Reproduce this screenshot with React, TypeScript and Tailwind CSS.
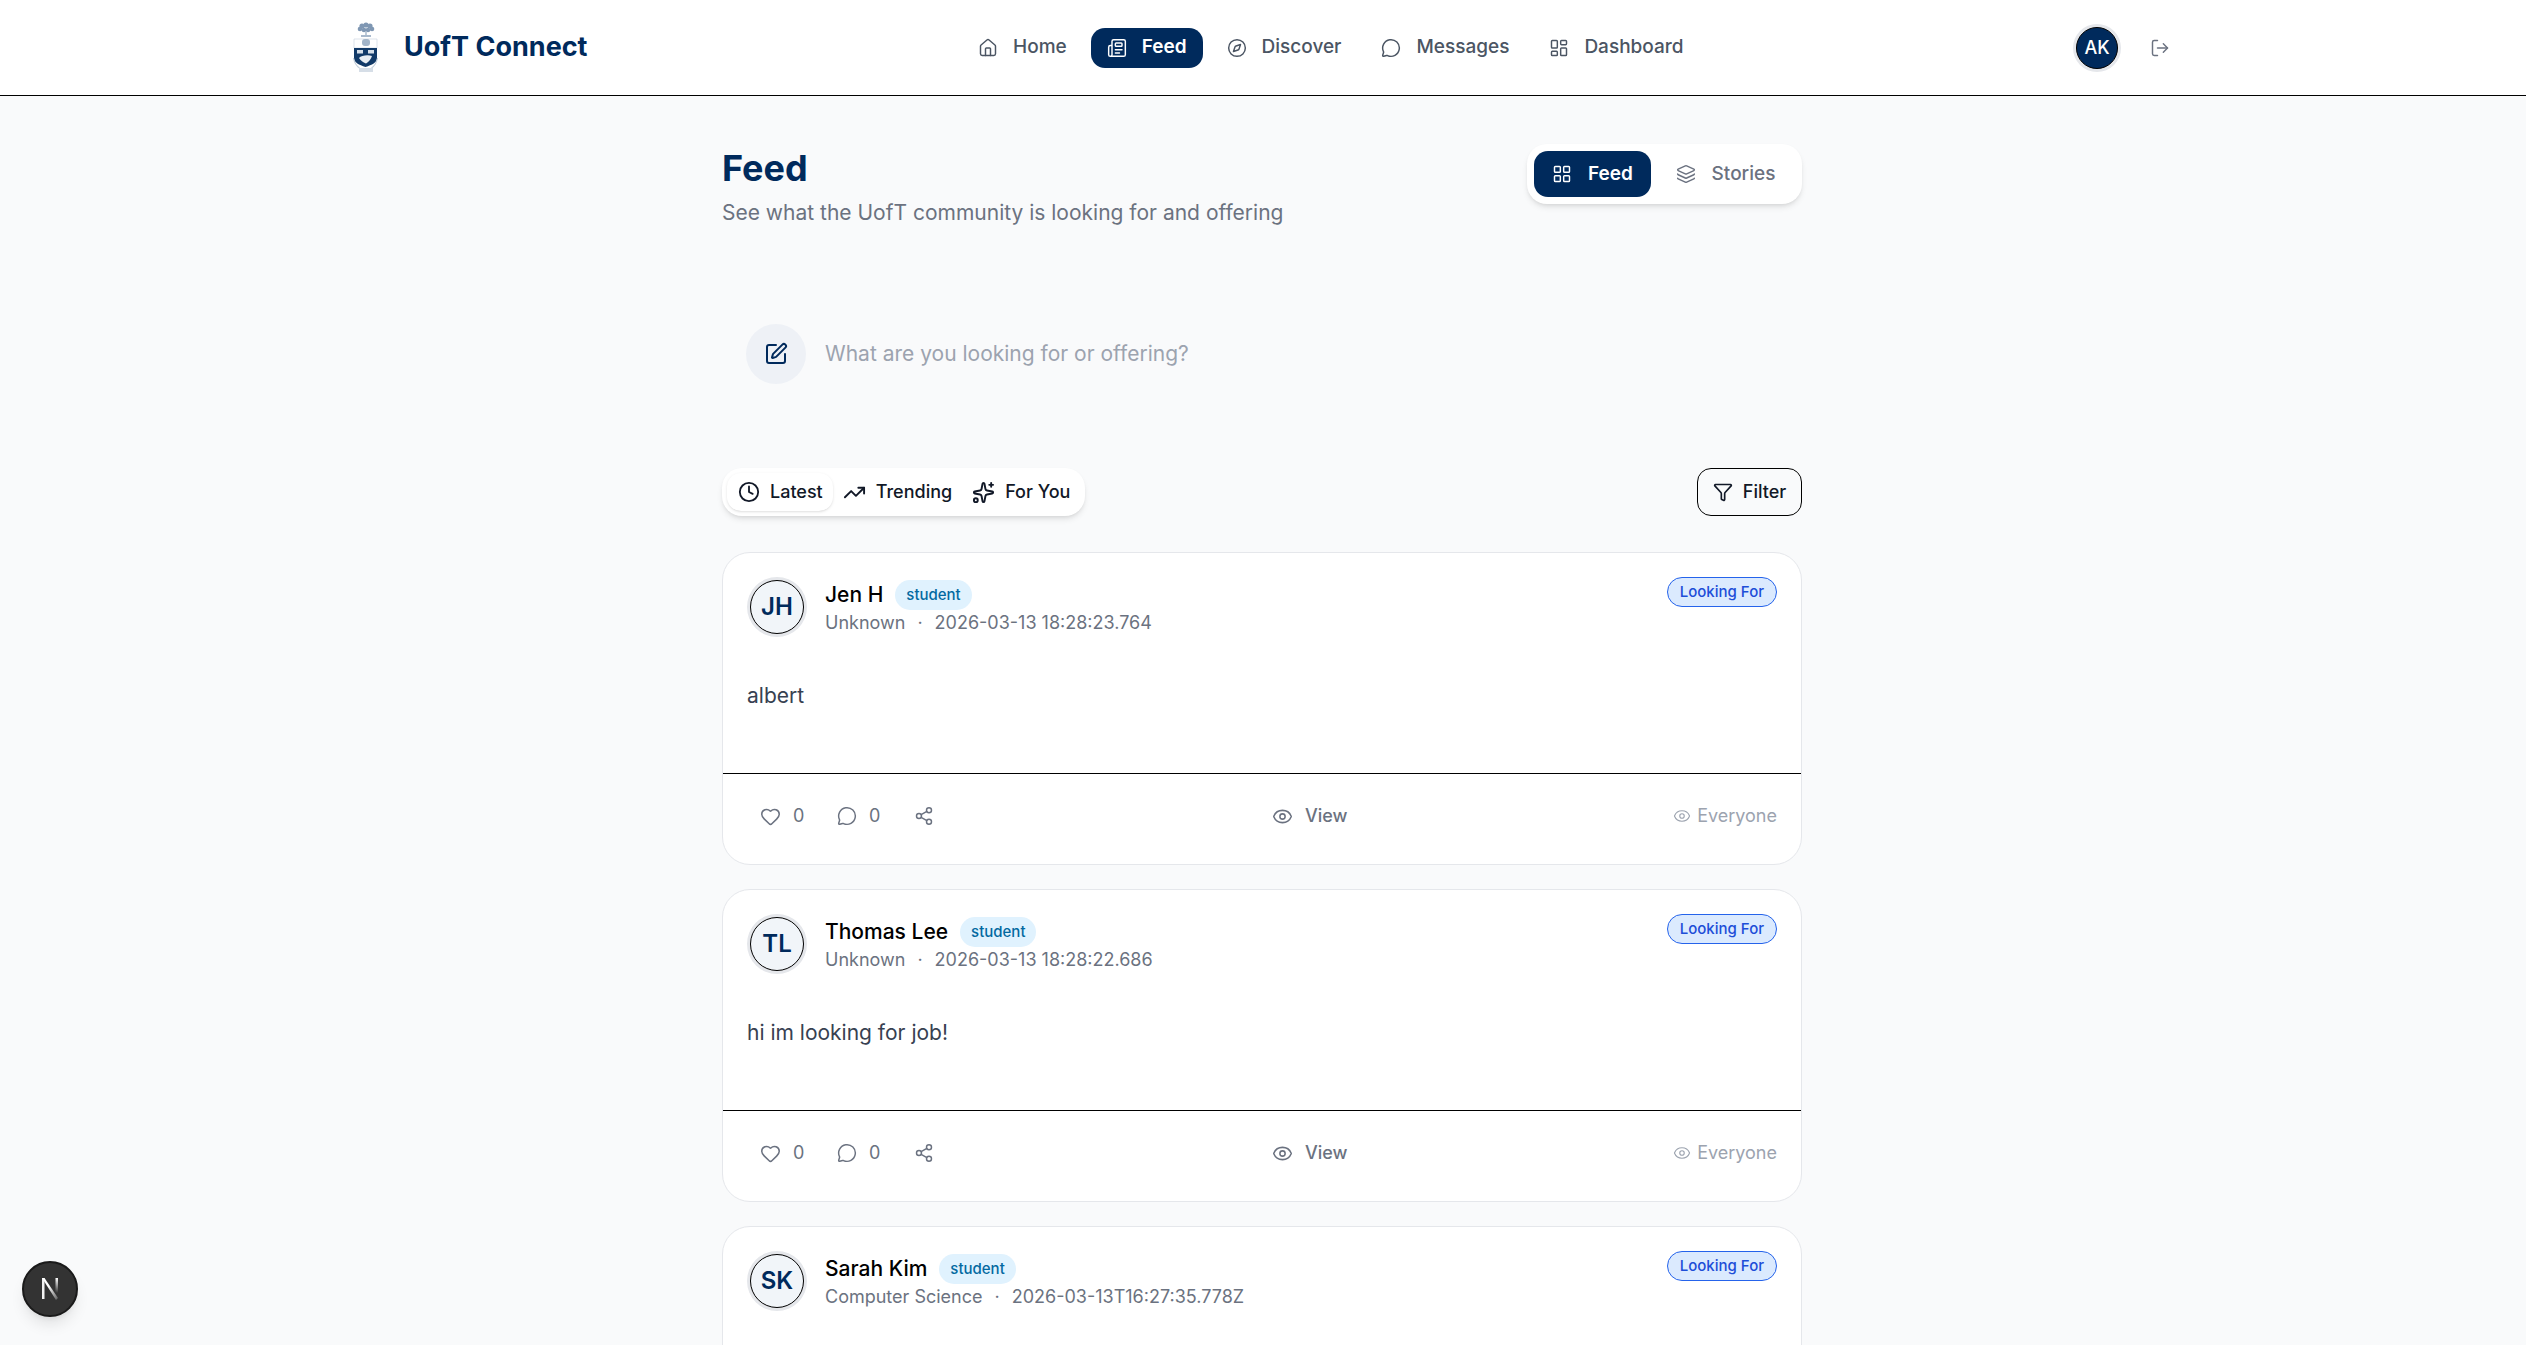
import React from 'react'
import {
  Clock,
  Compass,
  Eye,
  Filter,
  Heart,
  Home,
  Layers,
  LayoutDashboard,
  LayoutGrid,
  LogOut,
  MessageCircle,
  Newspaper,
  Share2,
  Sparkles,
  SquarePen,
  TrendingUp,
} from 'lucide-react'

const Crest = () => (
  <svg width="26" height="52" viewBox="0 0 26 52" fill="none" className="shrink-0">
    <g fill="#7f97b3">
      <circle cx="13" cy="3" r="2.6" />
      <circle cx="9" cy="4" r="2.6" />
      <circle cx="17" cy="4" r="2.6" />
      <circle cx="7" cy="7" r="2.3" />
      <circle cx="19" cy="7" r="2.3" />
      <circle cx="11" cy="8" r="2.3" />
      <circle cx="15" cy="8" r="2.3" />
    </g>
    <path d="M13 9v4" stroke="#a9bacd" strokeWidth="1.5" />
    <path d="M8 14h10" stroke="#a9bacd" strokeWidth="2" />
    <path d="M1 17h23v9H1z" fill="#ffffff" stroke="#c8d2de" strokeWidth="0.6" />
    <rect x="9" y="17" width="8" height="7" rx="3" fill="#a3b5c9" />
    <path d="M1 26h23v11c0 3-5 6-11.500 8C6 43 1 40 1 37z" fill="#123a68" />
    <rect x="4" y="28" width="6" height="3.500" fill="#d5dee8" />
    <rect x="15" y="28" width="6" height="3.500" fill="#d5dee8" />
    <path d="M6 36c2-2.500 9-3.500 13-2-1 3-3 6-6 7.500-3-1-5.500-3-7-5.500z" fill="#e9eef3" />
    <path d="M0.500 36c1 5 3 8 6 10M24.500 36c-1 5-3 8-6 10" stroke="#c3cfdb" strokeWidth="1.200" />
    <path d="M6 46h14v4H6z" fill="#d6dee7" />
  </svg>
)

const NextMark = () => (
  <svg width="18" height="22" viewBox="0 0 18 22" fill="none">
    <defs>
      <linearGradient id="nextright" x1="0" y1="0" x2="0" y2="1">
        <stop offset="0" stopColor="#ffffff" />
        <stop offset="1" stopColor="#ffffff" stopOpacity="0" />
      </linearGradient>
      <linearGradient id="nextdiag" x1="0" y1="0" x2="1" y2="1">
        <stop offset="0.4" stopColor="#ffffff" />
        <stop offset="1" stopColor="#ffffff" stopOpacity="0.2" />
      </linearGradient>
    </defs>
    <rect x="1" y="0" width="2.500" height="21" fill="#f2f2f2" />
    <rect x="14.500" y="0" width="2.500" height="15" fill="url(#nextright)" />
    <polygon points="1,0 3.500,0 17,20 15,22" fill="url(#nextdiag)" />
  </svg>
)

const navItems = [
  { label: 'Home', icon: Home },
  { label: 'Feed', icon: Newspaper, active: true },
  { label: 'Discover', icon: Compass },
  { label: 'Messages', icon: MessageCircle },
  { label: 'Dashboard', icon: LayoutDashboard },
]

const posts = [
  { initials: 'JH', name: 'Jen H', dept: 'Unknown', time: '2026-03-13 18:28:23.764', body: 'albert' },
  { initials: 'TL', name: 'Thomas Lee', dept: 'Unknown', time: '2026-03-13 18:28:22.686', body: 'hi im looking for job!' },
  { initials: 'SK', name: 'Sarah Kim', dept: 'Computer Science', time: '2026-03-13T16:27:35.778Z' },
]

type Post = { initials: string; name: string; dept: string; time: string; body?: string }

const Navbar = () => (
  <header className="h-[96px] shrink-0 bg-white border-b border-black">
    <div className="h-full flex items-center justify-between pl-[353px] pr-[356px]">
      <div className="flex items-center gap-[25px]">
        <Crest />
        <span className="text-[27px] font-bold text-[#002a5c]">UofT Connect</span>
      </div>
      <nav className="flex items-center gap-2 ml-[-2px]">
        {navItems.map(({ label, icon: Icon, active }) => (
          <div
            key={label}
            className={`h-10 flex items-center gap-[15px] px-4 rounded-[14px] text-[19px] ${
              active ? 'bg-[#002a5c] text-white font-semibold' : 'text-[#4b5563] font-medium'
            }`}
          >
            <Icon size={20} strokeWidth={1.75} />
            {label}
          </div>
        ))}
      </nav>
      <div className="flex items-center gap-[32px]">
        <div className="w-[42px] h-[42px] rounded-full bg-[#002a5c] border border-black ring-[3px] ring-[#e5e7eb] flex items-center justify-center text-white text-lg font-medium">
          AK
        </div>
        <LogOut size={20} strokeWidth={1.75} className="text-[#6b7280]" />
      </div>
    </div>
  </header>
)

const PostCard = ({ initials, name, dept, time, body }: Post) => (
  <article className="shrink-0 h-[313px] bg-white border border-[#e5e7eb] rounded-[28px] flex flex-col">
    <div className="h-[221px] border-b border-black px-[24px] pt-[24px] flex flex-col">
      <div className="flex justify-between items-start">
        <div className="flex items-center gap-[18px]">
          <div className="w-[54px] h-[54px] m-[3px] rounded-full bg-[#f1f5f9] border border-black ring-[3px] ring-[#e5e7eb] flex items-center justify-center text-2xl font-semibold text-[#002a5c]">
            {initials}
          </div>
          <div className="flex flex-col">
            <div className="flex items-center gap-[12px] h-[30px] mt-[1px]">
              <span className="text-[21px] font-medium text-black">{name}</span>
              <span className="h-[30px] px-[11px] rounded-full bg-[#e0f2fe] text-[#0369a1] text-[15px] font-medium flex items-center">
                student
              </span>
            </div>
            <div className="flex items-center gap-[12px] text-lg text-[#6b7280] leading-[25px]">
              <span>{dept}</span>
              <span>·</span>
              <span>{time}</span>
            </div>
          </div>
        </div>
        <span className="h-[30px] px-[12px] rounded-full bg-[#dbeafe] border border-[#2563eb] text-[#1d4ed8] text-[15px] font-medium flex items-center">
          Looking For
        </span>
      </div>
      {body && <p className="mt-[45px] text-[21px] leading-[28px] text-[#374151]">{body}</p>}
    </div>
    {body && (
      <div className="flex-1 relative flex items-center justify-between pl-[37px] pr-[24px] pb-[6px] text-[#6b7280]">
        <div className="flex items-center text-lg">
          <Heart size={21} strokeWidth={1.75} />
          <span className="ml-3 w-[12px]">0</span>
          <MessageCircle size={20} strokeWidth={1.75} className="ml-[32px]" />
          <span className="ml-3 w-[12px]">0</span>
          <Share2 size={20} strokeWidth={1.75} className="ml-[33px]" />
        </div>
        <div className="absolute left-[549px] flex items-center gap-3 text-lg font-medium">
          <Eye size={21} strokeWidth={1.75} />
          View
        </div>
        <div className="flex items-center gap-[6px] text-lg text-[#9ca3af]">
          <Eye size={18} strokeWidth={1.5} />
          Everyone
        </div>
      </div>
    )}
  </article>
)

export default function App() {
  return (
    <div className="relative h-screen overflow-hidden bg-[#f9fafb] flex flex-col font-['Inter',sans-serif]">
      <Navbar />
      <main className="w-[1080px] ml-[722px] flex flex-col">
        <section className="flex justify-between items-start pt-[48px]">
          <div>
            <h1 className="text-[36px] leading-[48px] font-bold text-[#002a5c]">Feed</h1>
            <p className="mt-[7px] text-[21px] leading-[28px] text-[#6b7280]">See what the UofT community is looking for and offering</p>
          </div>
          <div className="flex items-center p-[7px] bg-white rounded-[20px] shadow-md">
            <div className="h-[46px] w-[117px] flex items-center justify-center gap-4 rounded-[14px] bg-[#002a5c] text-white text-[19px] font-semibold">
              <LayoutGrid size={20} strokeWidth={1.75} />
              Feed
            </div>
            <div className="h-[46px] w-[144px] pl-[5px] flex items-center justify-center gap-4 text-[#6b7280] text-[19px] font-medium">
              <Layers size={20} strokeWidth={1.75} />
              Stories
            </div>
          </div>
        </section>

        <section className="mt-[97px] flex items-center gap-[19px] pl-[24px]">
          <div className="w-[60px] h-[60px] rounded-full bg-[#eef1f6] flex items-center justify-center text-[#002a5c]">
            <SquarePen size={24} strokeWidth={2} />
          </div>
          <span className="text-[21px] text-[#9ca3af]">What are you looking for or offering?</span>
        </section>

        <section className="mt-[84px] flex justify-between items-center">
          <div className="h-12 flex items-center pl-[5px] pr-[15px] bg-white rounded-[20px] shadow-md text-lg font-medium text-[#111827]">
            <div className="h-[38px] flex items-center gap-[10px] pl-[11px] pr-[10px] rounded-[14px] bg-white shadow-sm">
              <Clock size={22} strokeWidth={2} />
              Latest
            </div>
            <div className="flex items-center gap-[10px] ml-[10px]">
              <TrendingUp size={23} strokeWidth={2} />
              Trending
            </div>
            <div className="flex items-center gap-[10px] ml-[20px]">
              <Sparkles size={23} strokeWidth={2} />
              For You
            </div>
          </div>
          <div className="h-12 w-[105px] flex items-center justify-center gap-[10px] rounded-[14px] border border-black text-lg font-medium text-[#111827]">
            <Filter size={20} strokeWidth={2} />
            Filter
          </div>
        </section>

        <section className="mt-[36px] flex flex-col gap-[24px]">
          {posts.map((p) => (
            <PostCard key={p.initials} {...p} />
          ))}
        </section>
      </main>

      <div className="absolute left-[22px] bottom-[28px] w-[56px] h-[56px] rounded-full bg-[#333333] border-2 border-[#1a1a1a] shadow-lg flex items-center justify-center">
        <NextMark />
      </div>
    </div>
  )
}
